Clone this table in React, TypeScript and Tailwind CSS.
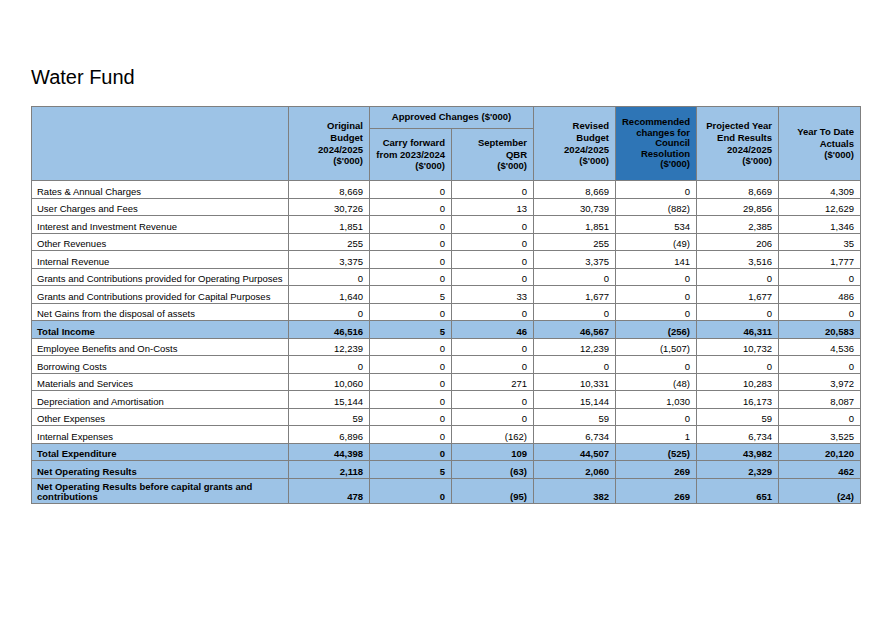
type Row = {
  label: string;
  values: string[];
  total?: boolean;
  tall?: boolean;
};

const rows: Row[] = [
  { label: 'Rates & Annual Charges', values: ['8,669', '0', '0', '8,669', '0', '8,669', '4,309'] },
  { label: 'User Charges and Fees', values: ['30,726', '0', '13', '30,739', '(882)', '29,856', '12,629'] },
  { label: 'Interest and Investment Revenue', values: ['1,851', '0', '0', '1,851', '534', '2,385', '1,346'] },
  { label: 'Other Revenues', values: ['255', '0', '0', '255', '(49)', '206', '35'] },
  { label: 'Internal Revenue', values: ['3,375', '0', '0', '3,375', '141', '3,516', '1,777'] },
  { label: 'Grants and Contributions provided for Operating Purposes', values: ['0', '0', '0', '0', '0', '0', '0'] },
  { label: 'Grants and Contributions provided for Capital Purposes', values: ['1,640', '5', '33', '1,677', '0', '1,677', '486'] },
  { label: 'Net Gains from the disposal of assets', values: ['0', '0', '0', '0', '0', '0', '0'] },
  { label: 'Total Income', values: ['46,516', '5', '46', '46,567', '(256)', '46,311', '20,583'], total: true },
  { label: 'Employee Benefits and On-Costs', values: ['12,239', '0', '0', '12,239', '(1,507)', '10,732', '4,536'] },
  { label: 'Borrowing Costs', values: ['0', '0', '0', '0', '0', '0', '0'] },
  { label: 'Materials and Services', values: ['10,060', '0', '271', '10,331', '(48)', '10,283', '3,972'] },
  { label: 'Depreciation and Amortisation', values: ['15,144', '0', '0', '15,144', '1,030', '16,173', '8,087'] },
  { label: 'Other Expenses', values: ['59', '0', '0', '59', '0', '59', '0'] },
  { label: 'Internal Expenses', values: ['6,896', '0', '(162)', '6,734', '1', '6,734', '3,525'] },
  { label: 'Total Expenditure', values: ['44,398', '0', '109', '44,507', '(525)', '43,982', '20,120'], total: true },
  { label: 'Net Operating Results', values: ['2,118', '5', '(63)', '2,060', '269', '2,329', '462'], total: true },
  {
    label: 'Net Operating Results before capital grants and contributions',
    values: ['478', '0', '(95)', '382', '269', '651', '(24)'],
    total: true,
    tall: true,
  },
];

const th = 'border border-[#7f7f7f] bg-[#9dc3e6] font-bold text-right align-middle px-[6px] leading-[11.7px]';

export default function App() {
  return (
    <div className="min-h-screen bg-white pt-[65px] pl-[31px] text-black" style={{ fontFamily: '"Liberation Sans", Arial, sans-serif' }}>
      <h1 className="text-[20px] leading-[24px] mb-[17px]">Water Fund</h1>
      <table className="table-fixed border-collapse w-[829px] text-[9.5px]">
        <colgroup>
          <col className="w-[257px]" />
          <col className="w-[81px]" />
          <col className="w-[82px]" />
          <col className="w-[82px]" />
          <col className="w-[82px]" />
          <col className="w-[81px]" />
          <col className="w-[82px]" />
          <col className="w-[82px]" />
        </colgroup>
        <thead>
          <tr className="h-[22px]">
            <th rowSpan={2} className={th}></th>
            <th rowSpan={2} className={th}>
              Original
              <br />
              Budget
              <br />
              2024/2025
              <br />
              ($'000)
            </th>
            <th colSpan={2} className="border border-[#7f7f7f] bg-[#9dc3e6] font-bold text-center align-middle">
              Approved Changes ($'000)
            </th>
            <th rowSpan={2} className={th}>
              Revised
              <br />
              Budget
              <br />
              2024/2025
              <br />
              ($'000)
            </th>
            <th rowSpan={2} className="border border-[#7f7f7f] bg-[#2e75b6] font-bold text-right align-middle px-[6px] leading-[10.5px]">
              Recommended
              <br />
              changes for
              <br />
              Council
              <br />
              Resolution
              <br />
              ($'000)
            </th>
            <th rowSpan={2} className={th}>
              Projected Year
              <br />
              End Results
              <br />
              2024/2025
              <br />
              ($'000)
            </th>
            <th rowSpan={2} className={th}>
              Year To Date
              <br />
              Actuals
              <br />
              ($'000)
            </th>
          </tr>
          <tr className="h-[52px]">
            <th className={th}>
              Carry forward
              <br />
              from 2023/2024
              <br />
              ($'000)
            </th>
            <th className={th}>
              September
              <br />
              QBR
              <br />
              ($'000)
            </th>
          </tr>
        </thead>
        <tbody>
          {rows.map((r) => (
            <tr key={r.label} className={r.tall ? 'h-[25.5px]' : 'h-[17.5px]'}>
              <td
                className={`border border-[#7f7f7f] px-[5px] align-bottom leading-[10.7px] ${
                  r.total ? 'bg-[#9dc3e6] font-bold' : ''
                }`}
              >
                {r.label}
              </td>
              {r.values.map((v, i) => (
                <td
                  key={i}
                  className={`border border-[#7f7f7f] px-[6px] text-right align-bottom leading-[10.7px] ${
                    r.total ? 'bg-[#9dc3e6] font-bold' : ''
                  }`}
                >
                  {v}
                </td>
              ))}
            </tr>
          ))}
        </tbody>
      </table>
    </div>
  );
}
